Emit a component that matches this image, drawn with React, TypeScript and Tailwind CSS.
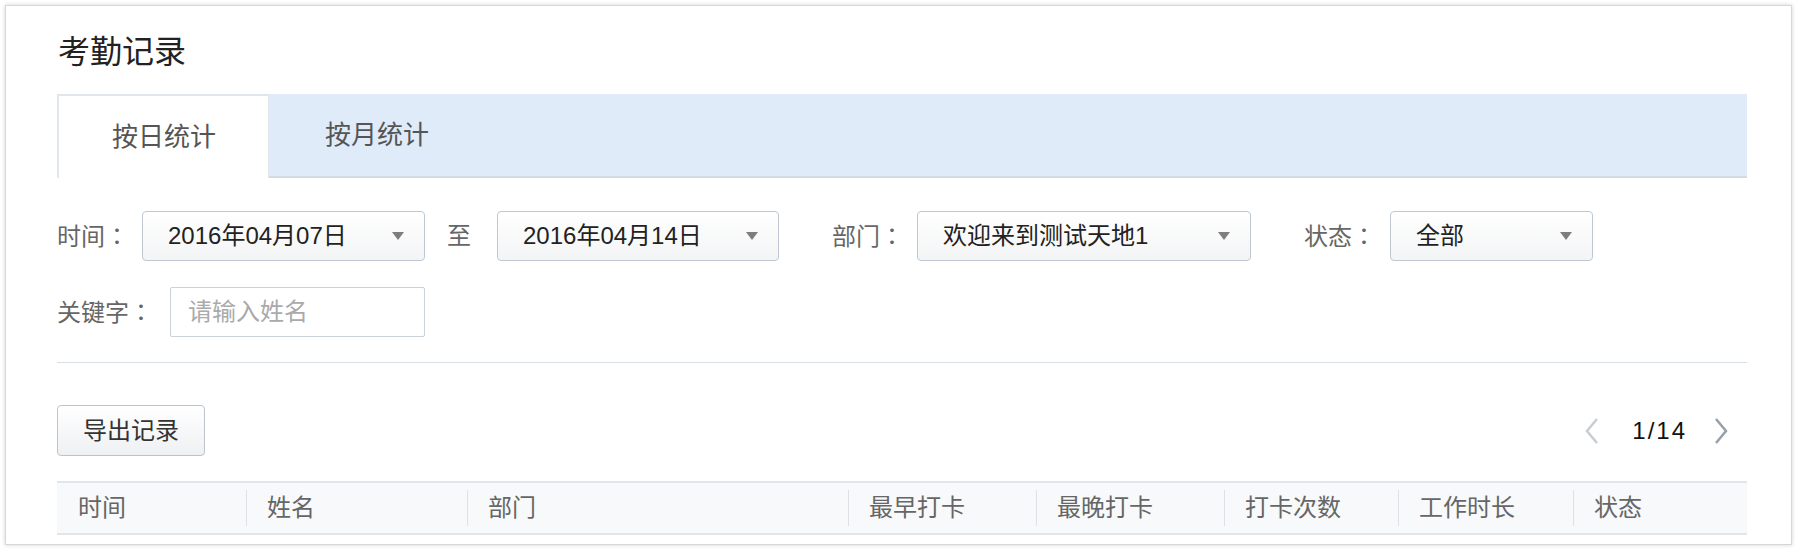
import React from "react";

const font = "font-['Liberation_Sans','Noto_Sans_CJK_SC',sans-serif]";

const Caret = () => (
    <svg width="12" height="8" viewBox="0 0 12 8" className="shrink-0">
        <path d="M0 0 L12 0 L6 8 Z" fill="#7d7d7d" />
    </svg>
);

const Select = ({ value, width }: { value: string; width: string }) => (
    <div
        className={`${width} h-[50px] flex items-center justify-between pl-[25px] pr-[20px] rounded-[4px] border border-[#bfc8d2] bg-gradient-to-b from-white to-[#f3f4f5] text-[24px] leading-[30px] text-[#222]`}
    >
        <span>{value}</span>
        <Caret />
    </div>
);

const Label = ({ text }: { text: string }) => (
    <span className="text-[24px] leading-[30px] text-[#666] whitespace-nowrap">
        {text}
        <span className="font-['Noto_Sans_CJK_JP',sans-serif]">：</span>
    </span>
);

const columns = ["时间", "姓名", "部门", "最早打卡", "最晚打卡", "打卡次数", "工作时长", "状态"];

export default function App() {
    return (
        <div className={`${font} bg-white min-h-[552px] pt-[5px] pl-[5px]`}>
            <div className="w-[1787px] border border-[#d7d7d7] shadow-[0_0_4px_rgba(0,0,0,0.18)] bg-white pl-[51px] pr-[44px] pt-[26px] pb-[9px]">
                <h1 className="text-[32px] leading-[40px] text-[#222] pl-[1px]">考勤记录</h1>

                {/* tabs */}
                <div className="mt-[22px] h-[84px] flex bg-[#dfebf8] border-b-2 border-[#d2dbe5]">
                    <div className="w-[212px] h-[84px] -mb-[2px] bg-white border-l-2 border-t-2 border-r border-[#e0e6ec] flex items-center pl-[53px] text-[26px] text-[#555]">
                        按日统计
                    </div>
                    <div className="flex items-center pl-[56px] text-[26px] text-[#555]">按月统计</div>
                </div>

                {/* filters */}
                <div className="mt-[33px] flex items-center">
                    <Label text="时间" />
                    <div className="ml-[13px]">
                        <Select value="2016年04月07日" width="w-[283px]" />
                    </div>
                    <span className="ml-[22px] mr-[26px] text-[24px] text-[#666]">至</span>
                    <Select value="2016年04月14日" width="w-[282px]" />
                    <div className="ml-[53px]">
                        <Label text="部门" />
                    </div>
                    <div className="ml-[13px]">
                        <Select value="欢迎来到测试天地1" width="w-[334px]" />
                    </div>
                    <div className="ml-[53px]">
                        <Label text="状态" />
                    </div>
                    <div className="ml-[14px]">
                        <Select value="全部" width="w-[203px]" />
                    </div>
                </div>

                <div className="mt-[26px] flex items-center">
                    <Label text="关键字" />
                    <input
                        placeholder="请输入姓名"
                        className="ml-[17px] w-[255px] h-[50px] border border-[#c9d1d9] rounded-[2px] px-[17px] text-[24px] text-[#333] placeholder:text-[#aaa] outline-none"
                    />
                </div>

                <div className="mt-[25px] h-px bg-[#d9dee4]" />

                {/* toolbar */}
                <div className="mt-[42px] flex items-center justify-between">
                    <button className="w-[148px] h-[51px] rounded-[4px] border border-[#bcc5cf] bg-gradient-to-b from-white to-[#eef0f2] text-[24px] text-[#333]">
                        导出记录
                    </button>
                    <div className="flex items-center pr-[19px]">
                        <svg width="14" height="26" viewBox="0 0 14 26">
                            <path d="M12 1 L2 13 L12 25" fill="none" stroke="#c6cdd4" strokeWidth="2.5" />
                        </svg>
                        <span className="ml-[33px] mr-[27px] text-[24px] leading-[30px] tracking-[2px] text-[#111]">1/14</span>
                        <svg width="14" height="26" viewBox="0 0 14 26">
                            <path d="M2 1 L12 13 L2 25" fill="none" stroke="#95a0aa" strokeWidth="2.5" />
                        </svg>
                    </div>
                </div>

                {/* table header */}
                <div className="mt-[25px] h-[54px] grid grid-cols-[189px_221px_381px_188px_188px_174px_175px_1fr] bg-[#f7f9fb] border-y-2 border-[#e1e6ec]">
                    {columns.map((c, i) => (
                        <div key={c} className="flex items-center">
                            {i > 0 && <div className="w-px h-[36px] bg-[#dde2e7]" />}
                            <span className={`${i > 0 ? "pl-[20px]" : "pl-[21px]"} text-[24px] text-[#666]`}>{c}</span>
                        </div>
                    ))}
                </div>
            </div>
        </div>
    );
}
